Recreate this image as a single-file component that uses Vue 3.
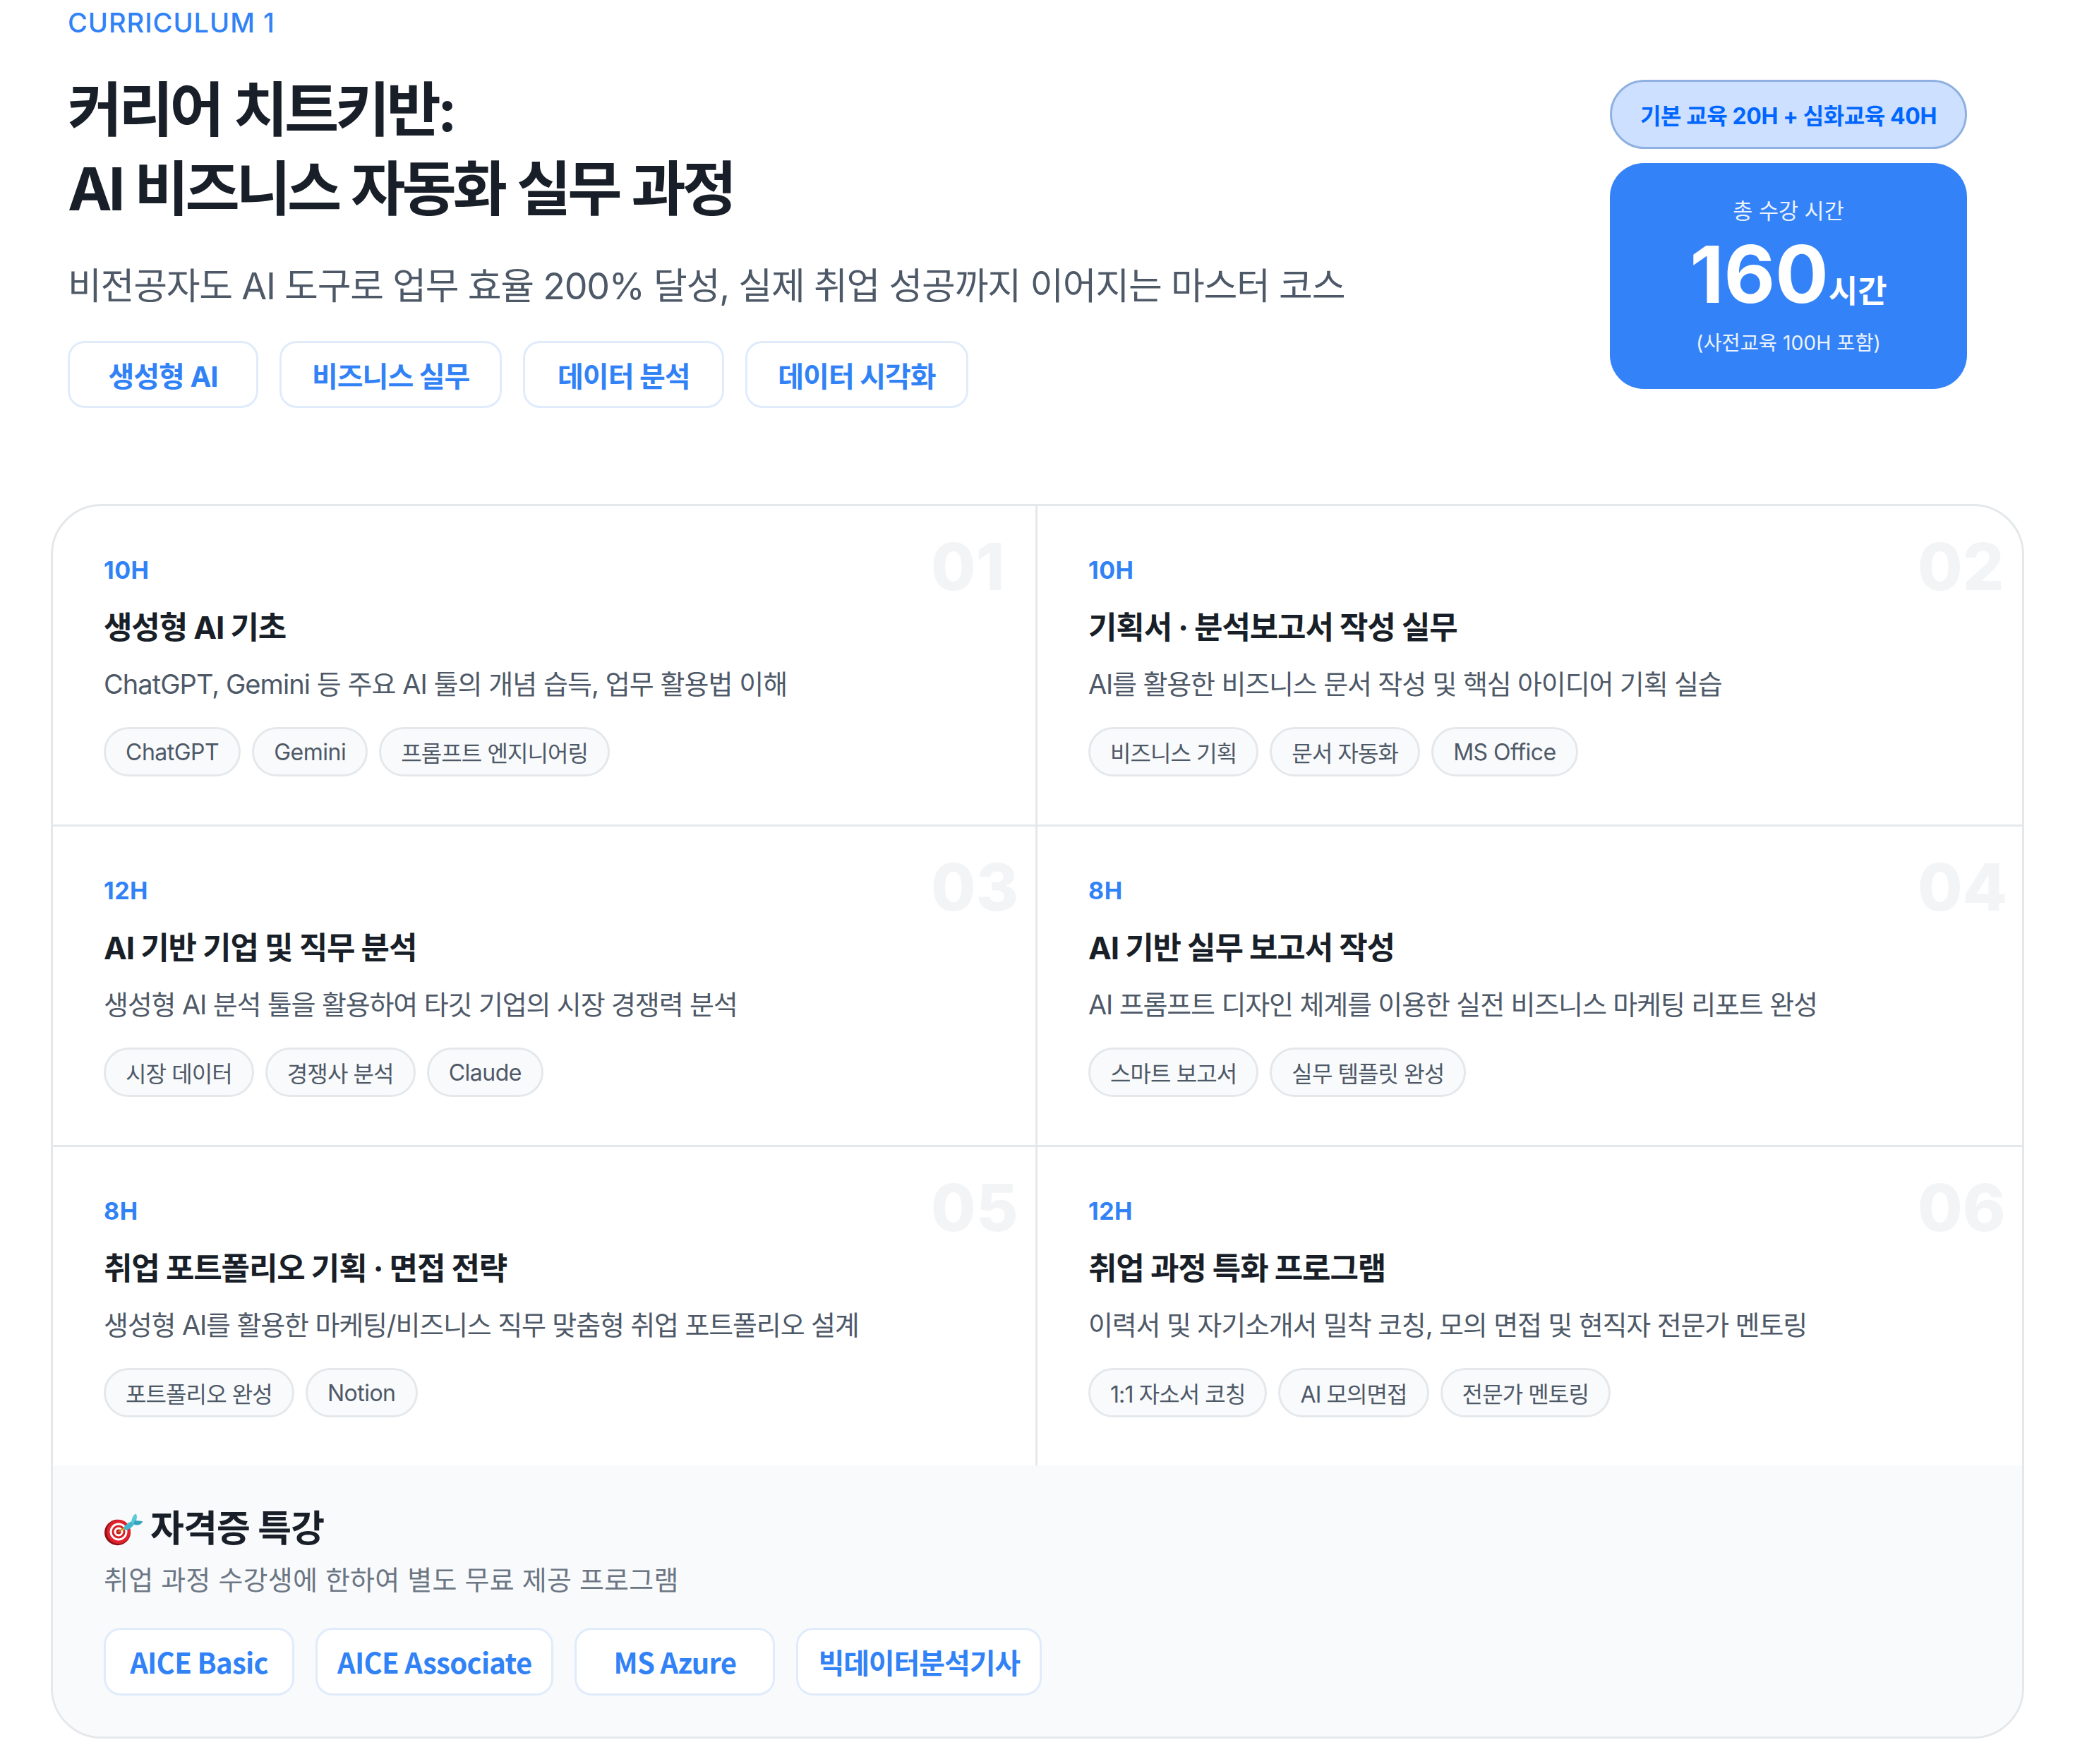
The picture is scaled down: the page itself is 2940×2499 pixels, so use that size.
<script setup>
const tags = ['생성형 AI', '비즈니스 실무', '데이터 분석', '데이터 시각화']
const modules = [
  { n: '01', h: '10H', t: '생성형 AI 기초', d: 'ChatGPT, Gemini 등 주요 AI 툴의 개념 습득, 업무 활용법 이해', c: ['ChatGPT', 'Gemini', '프롬프트 엔지니어링'] },
  { n: '02', h: '10H', t: '기획서 · 분석보고서 작성 실무', d: 'AI를 활용한 비즈니스 문서 작성 및 핵심 아이디어 기획 실습', c: ['비즈니스 기획', '문서 자동화', 'MS Office'] },
  { n: '03', h: '12H', t: 'AI 기반 기업 및 직무 분석', d: '생성형 AI 분석 툴을 활용하여 타깃 기업의 시장 경쟁력 분석', c: ['시장 데이터', '경쟁사 분석', 'Claude'] },
  { n: '04', h: '8H', t: 'AI 기반 실무 보고서 작성', d: 'AI 프롬프트 디자인 체계를 이용한 실전 비즈니스 마케팅 리포트 완성', c: ['스마트 보고서', '실무 템플릿 완성'] },
  { n: '05', h: '8H', t: '취업 포트폴리오 기획 · 면접 전략', d: '생성형 AI를 활용한 마케팅/비즈니스 직무 맞춤형 취업 포트폴리오 설계', c: ['포트폴리오 완성', 'Notion'] },
  { n: '06', h: '12H', t: '취업 과정 특화 프로그램', d: '이력서 및 자기소개서 밀착 코칭, 모의 면접 및 현직자 전문가 멘토링', c: ['1:1 자소서 코칭', 'AI 모의면접', '전문가 멘토링'] },
]
const certs = ['AICE Basic', 'AICE Associate', 'MS Azure', '빅데이터분석기사']
const isLatin = (s) => /^[\x00-\x7f]+$/.test(s)
</script>

<template>
  <div class="page">
    <header class="head">
      <div class="intro">
        <div class="eyebrow">CURRICULUM 1</div>
        <h1 class="title">커리어 치트키반:<br />AI 비즈니스 자동화 실무 과정</h1>
        <p class="lead">비전공자도 AI 도구로 업무 효율 200% 달성, 실제 취업 성공까지 이어지는 마스터 코스</p>
        <div class="tags">
          <span v-for="t in tags" :key="t" class="tag">{{ t }}</span>
        </div>
      </div>
      <aside class="side">
        <div class="pill">기본 교육 20H + 심화교육 40H</div>
        <div class="total">
          <div class="total-label">총 수강 시간</div>
          <div class="total-num">160<span class="total-unit">시간</span></div>
          <div class="total-sub">(사전교육 100H 포함)</div>
        </div>
      </aside>
    </header>

    <section class="board">
      <div class="grid">
        <article v-for="m in modules" :key="m.n" class="cell">
          <span class="num">{{ m.n }}</span>
          <div class="hours">{{ m.h }}</div>
          <h3 class="cell-title">{{ m.t }}</h3>
          <p class="cell-desc">{{ m.d }}</p>
          <div class="chips">
            <span v-for="c in m.c" :key="c" class="chip" :class="{ latin: isLatin(c) }">{{ c }}</span>
          </div>
        </article>
      </div>
      <div class="bonus">
        <h3 class="bonus-title">
          <svg class="dart" viewBox="0 0 56 48" aria-hidden="true">
            <ellipse cx="19.5" cy="29" rx="18.5" ry="18.200" fill="#8f0f16" />
            <ellipse cx="21" cy="28" rx="17" ry="17" fill="#e0202a" />
            <ellipse cx="21" cy="28" rx="12.500" ry="12.500" fill="#fff" />
            <ellipse cx="21" cy="28" rx="9.500" ry="9.500" fill="#d81e28" />
            <ellipse cx="21" cy="28" rx="6.500" ry="6.500" fill="#fff" />
            <ellipse cx="21" cy="28" rx="3.500" ry="3.500" fill="#cf1b24" />
            <path d="M21 28L27 23.500" stroke="#b8860b" stroke-width="1.600" stroke-linecap="round" />
            <path d="M25.500 26.500L29 21L32 24Z" fill="#f0b020" />
            <path d="M28 23C30 18 35 15 40 13L43 17C41 21 36 25 31 26Z" fill="#42b8cf" />
            <path d="M39 14C40 8 42 4 45.500 2.500C47.500 5 47.500 9 45 14L42 17Z" fill="#5cc8d8" />
            <path d="M42 17L44 12L55 13C54 17 50 19 45 18.500Z" fill="#36a6bd" />
          </svg>
          <span>자격증 특강</span>
        </h3>
        <p class="bonus-desc">취업 과정 수강생에 한하여 별도 무료 제공 프로그램</p>
        <div class="certs">
          <span v-for="c in certs" :key="c" class="cert">{{ c }}</span>
        </div>
      </div>
    </section>
  </div>
</template>

<style>
html, body { margin: 0; background: #fff; }
</style>

<style scoped>
.page {
  width: 2940px;
  height: 2499px;
  box-sizing: border-box;
  padding: 12px 72px 0;
  font-family: Inter, "Noto Sans CJK KR", sans-serif;
  color: #191f28;
  background: #fff;
  overflow: hidden;
}
.head {
  display: flex;
  justify-content: space-between;
  padding: 0 81px 0 24px;
  height: 702px;
}
.eyebrow {
  font-size: 38px;
  line-height: 40px;
  font-weight: 500;
  letter-spacing: 1px;
  color: #3182f6;
}
.title {
  margin: 48px 0 0;
  font-size: 84px;
  line-height: 112px;
  font-weight: 700;
  letter-spacing: -5px;
  word-spacing: 3px;
}
.lead {
  margin: 42px 0 0;
  font-size: 52px;
  line-height: 80px;
  font-weight: 400;
  letter-spacing: -1.25px;
  color: #4e5968;
}
.tags {
  display: flex;
  gap: 30px;
  margin-top: 37px;
}
.tag {
  display: flex;
  align-items: center;
  justify-content: center;
  height: 95px;
  box-sizing: border-box;
  padding: 0 43px;
  border: 3px solid #e0ecfb;
  border-radius: 24px;
  font-size: 40px;
  font-weight: 700;
  letter-spacing: -1px;
  color: #3182f6;
}
.tag:first-child {
  min-width: 270px;
}
.tag:nth-child(3) {
  min-width: 285px;
}
.side {
  width: 506px;
  display: flex;
  flex-direction: column;
  gap: 20px;
  padding-top: 101px;
}
.pill {
  height: 98px;
  box-sizing: border-box;
  display: flex;
  align-items: center;
  justify-content: center;
  border: 3px solid #8fb0e0;
  border-radius: 49px;
  background: #cde0ff;
  color: #0066ff;
  font-size: 32px;
  font-weight: 700;
  letter-spacing: -0.4px;
  white-space: nowrap;
}
.total {
  height: 320px;
  box-sizing: border-box;
  display: flex;
  flex-direction: column;
  align-items: center;
  padding-top: 46px;
  border-radius: 48px;
  background: #3482f8;
  color: #fff;
}
.total-label {
  font-size: 30.5px;
  line-height: 44px;
  opacity: 0.9;
}
.total-num {
  margin-top: 14px;
  font-size: 112px;
  line-height: 106px;
  font-weight: 700;
}
.total-unit {
  font-size: 45px;
  font-weight: 700;
}
.total-sub {
  margin-top: -2px;
  font-size: 28.4px;
  line-height: 44px;
  opacity: 0.9;
}
.board {
  width: 2796px;
  box-sizing: border-box;
  border: 3px solid #e5e8eb;
  border-radius: 72px;
  overflow: hidden;
}
.grid {
  display: grid;
  grid-template-columns: 1fr 1fr;
}
.cell {
  position: relative;
  box-sizing: border-box;
  height: 454px;
  padding: 69px 72px 0;
  border-bottom: 3px solid #e5e8eb;
}
.cell:nth-child(odd) {
  border-right: 3px solid #e5e8eb;
}
.cell:nth-last-child(-n + 2) {
  height: 451px;
  border-bottom: 0;
}
.num {
  position: absolute;
  top: 36px;
  left: 1244px;
  font-size: 92px;
  line-height: 100px;
  font-weight: 800;
  color: #f2f4f6;
}
.cell:nth-child(even) .num {
  left: 1247px;
}
.hours {
  font-size: 34px;
  line-height: 44px;
  font-weight: 700;
  letter-spacing: 0.5px;
  color: #3182f6;
}
.cell-title {
  margin: 27px 0 0;
  font-size: 44px;
  line-height: 64px;
  font-weight: 700;
  letter-spacing: -1.15px;
}
.cell-desc {
  margin: 18px 0 0;
  font-size: 38px;
  line-height: 60px;
  font-weight: 400;
  letter-spacing: -1.15px;
  color: #4e5968;
}
.cell:first-child .cell-desc {
  letter-spacing: -0.95px;
}
.chips {
  display: flex;
  gap: 16px;
  margin-top: 31px;
}
.chip {
  display: flex;
  align-items: center;
  height: 70px;
  box-sizing: border-box;
  padding: 0 28px;
  border: 3px solid #e5e8eb;
  border-radius: 35px;
  background: #f9fafb;
  font-size: 32px;
  letter-spacing: -0.9px;
  color: #4e5968;
}
.chip.latin {
  letter-spacing: -0.5px;
}
.bonus {
  height: 384px;
  box-sizing: border-box;
  padding: 52px 72px 0;
  background: #f9fafb;
}
.bonus-title {
  display: flex;
  align-items: center;
  gap: 10px;
  margin: 0;
  font-size: 52px;
  line-height: 76px;
  font-weight: 700;
  letter-spacing: -0.9px;
}
.dart {
  width: 56px;
  height: 48px;
}
.bonus-desc {
  margin: 4px 0 0;
  font-size: 38px;
  line-height: 60px;
  letter-spacing: 0.2px;
  color: #6b7684;
}
.certs {
  display: flex;
  gap: 30px;
  margin-top: 38px;
}
.cert {
  display: flex;
  align-items: center;
  justify-content: center;
  height: 96px;
  box-sizing: border-box;
  padding: 0 28px;
  border: 3px solid #e0ecfb;
  border-radius: 24px;
  background: #fff;
  font-family: "Noto Sans CJK KR", sans-serif;
  font-size: 40px;
  font-weight: 700;
  letter-spacing: -0.7px;
  color: #3182f6;
}
.cert:first-child {
  min-width: 270px;
}
.cert:nth-child(3) {
  min-width: 284px;
}
.cert:last-child {
  letter-spacing: -1.1px;
}
</style>
